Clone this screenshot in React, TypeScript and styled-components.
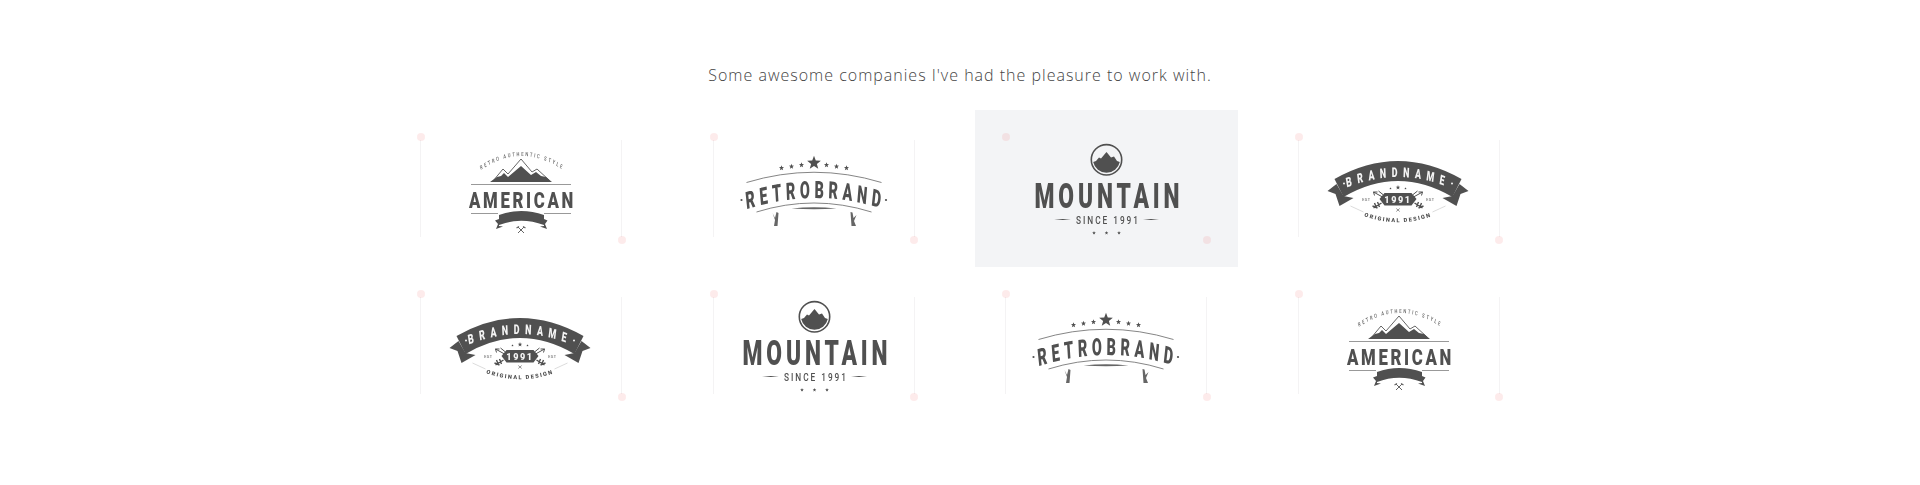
import React from "react";
import styled, { createGlobalStyle } from "styled-components";

const Global = createGlobalStyle`
  html, body { margin: 0; padding: 0; background: #fff; }
  body { font-family: "Open Sans", "Liberation Sans", sans-serif; }
`;

const Section = styled.section`
  width: 1140px;
  margin: 0 auto;
  padding: 60px 0 61px;
`;

const Title = styled.p`
  margin: 0 0 20px;
  font-size: 16px;
  font-weight: 300;
  line-height: 30px;
  letter-spacing: 1px;
  text-align: center;
  color: #444;
`;

const Grid = styled.div`
  display: grid;
  grid-template-columns: repeat(4, 262.5px);
  column-gap: 30px;
  grid-auto-rows: 157px;
`;

const Card = styled.div<{ $active?: boolean }>`
  position: relative;
  background: ${(p) => (p.$active ? "#f3f4f6" : "transparent")};
`;

const Dot = styled.span<{ $end?: boolean }>`
  position: absolute;
  left: ${(p) => (p.$end ? 227.5 : 27)}px;
  top: ${(p) => (p.$end ? 126 : 23)}px;
  width: 8px;
  height: 8px;
  border-radius: 50%;
  background: rgba(240, 110, 110, 0.14);
`;

const Rule = styled.span<{ $end?: boolean }>`
  position: absolute;
  left: ${(p) => (p.$end ? 231 : 30)}px;
  top: 30px;
  width: 1px;
  height: 97px;
  background: #f4f3f4;
`;

const Art = styled.svg`
  display: block;
  position: relative;
  width: 262.5px;
  height: 157px;
  filter: blur(0.4px);
`;

const Word = styled.text<{ $light?: boolean; $thin?: boolean; $soft?: boolean }>`
  font-family: Roboto, "Liberation Sans", sans-serif;
  font-weight: ${(p) => (p.$thin ? 500 : 900)};
  fill: ${(p) => (p.$light ? "#f4f4f4" : p.$soft ? "#6a6a6a" : "#505050")};
`;

const INK = "#505050";

function Star({ x, y, r }: { x: number; y: number; r: number }) {
  const pts: string[] = [];
  for (let i = 0; i < 10; i++) {
    const a = (Math.PI / 5) * i - Math.PI / 2;
    const q = i % 2 ? r * 0.42 : r;
    pts.push(`${(x + q * Math.cos(a)).toFixed(2)},${(y + q * Math.sin(a)).toFixed(2)}`);
  }
  return <polygon points={pts.join(" ")} fill={INK} />;
}

type ArcProps = {
  id: string;
  text: string;
  cx: number;
  apex: number;
  /** curvature: y = apex + bend * dx * dx, with dx in page units */
  bend: number;
  squeeze: number;
  size: number;
  spacing: number;
  light?: boolean;
  thin?: boolean;
  soft?: boolean;
};

/* Text on a parabola, squeezed horizontally because no condensed face is installed. */
function ArcWord({ id, text, cx, apex, bend, squeeze, size, spacing, light, thin, soft }: ArcProps) {
  const half = 100;
  const endY = apex + bend * half * half;
  const ctrlY = 2 * apex - endY;
  const w = half / squeeze;
  return (
    <g transform={`translate(${cx} 0) scale(${squeeze} 1)`}>
      <path id={id} d={`M${-w} ${endY} Q0 ${ctrlY} ${w} ${endY}`} fill="none" />
      <Word fontSize={size} letterSpacing={spacing} $light={light} $thin={thin} $soft={soft}>
        <textPath href={`#${id}`} startOffset="50%" textAnchor="middle">{text}</textPath>
      </Word>
    </g>
  );
}

function American({ uid }: { uid: string }) {
  return (
    <Art viewBox="390 110 262.5 157">
      <ArcWord id={`am-${uid}`} text="RETRO AUTHENTIC STYLE" cx={522} apex={156} bend={0.0082} squeeze={0.72} size={5.8} spacing={2.35} thin soft />
      <path d="M493 181 L503 169 L508 174 L521 159 L532 172 L537 169 L549 180" fill="none" stroke="#666" strokeWidth="1" />
      <polygon points="490,182 497,177 501,176 504,173 508,177 521,166 531,175 536,172 541,176 546,177 552,182" fill={INK} />
      <line x1="471" x2="571" y1="184.5" y2="184.5" stroke="#999" />
      <Word x="469" y="207.5" fontSize="22" letterSpacing="3.5" textLength="107" lengthAdjust="spacingAndGlyphs">AMERICAN</Word>
      <line x1="471" x2="498" y1="213.5" y2="213.5" stroke="#999" />
      <line x1="544" x2="571" y1="213.5" y2="213.5" stroke="#999" />
      <path d="M499 215 Q521 207 544 215 L544 225 Q521 216.5 499 225 Z" fill={INK} />
      <polygon points="499,219 495,220.5 498,224 496,229 503,226.5 499,226" fill={INK} />
      <polygon points="544,219 547.5,220.5 545,224 547,229 540,226.5 544,226" fill={INK} />
      <path d="M518 227 L524 233 M524 227 L518 233" stroke="#666" strokeWidth="1" />
      <path d="M516.5 228 L519 226.5 M525.5 228 L523 226.5" stroke="#666" strokeWidth="1.2" />
    </Art>
  );
}

function RetroBrand({ uid }: { uid: string }) {
  return (
    <Art viewBox="682.5 110 262.5 157">
      <Star x={813.5} y={163} r={7.2} />
      {[781, 791, 801, 826, 836, 846].map((x, i) => (
        <Star key={x} x={x} y={[168, 166.5, 165, 165, 166.5, 168][i]} r={2.7} />
      ))}
      <path d="M746 182.5 Q813.5 162 881 182.5" fill="none" stroke="#777" strokeWidth="0.9" />
      <ArcWord id={`rb-${uid}`} text="RETROBRAND" cx={815} apex={198} bend={0.0024} squeeze={0.6} size={24} spacing={7.5} />
      <circle cx="741" cy="200" r="1.1" fill={INK} />
      <circle cx="885.5" cy="200" r="1.1" fill={INK} />
      <path d="M756 212 Q813.5 194 871 212" fill="none" stroke="#777" strokeWidth="0.9" />
      <path d="M791 208.5 Q813.5 206 836 208.5 Q813.5 210 791 208.5 Z" fill="#666" />
      <path d="M772 213 L774.5 218 L776 212 L778 213 L777 226 L773.5 226 L774.5 220 Z" fill="#666" />
      <path d="M850 212 L852 212.5 L853 218 L856 215 L853.5 221 L855.5 226 L851 226 Z" fill="#666" />
    </Art>
  );
}

function Mountain() {
  return (
    <Art viewBox="975 110 262.5 157">
      <circle cx="1106.5" cy="159.8" r="15.2" fill="none" stroke={INK} strokeWidth="1.6" />
      <path
        d="M1093.2 162 L1096 161 L1099 157.5 L1101 158.5 L1106.5 152 L1111 157.5 L1114 156.5 L1117 161 L1119.8 162 A13.6 13.6 0 0 1 1093.2 162 Z"
        fill={INK}
      />
      <Word x="1034.5" y="208" fontSize="35" letterSpacing="6" textLength="149" lengthAdjust="spacingAndGlyphs">MOUNTAIN</Word>
      <path d="M1054 219.5 Q1063 218.6 1071 219.5 Q1063 220.4 1054 219.5 Z" fill={INK} />
      <path d="M1143 219.5 Q1151 218.6 1159 219.5 Q1151 220.4 1143 219.5 Z" fill={INK} />
      <Word x="1076" y="223.5" fontSize="10.5" letterSpacing="2.5" textLength="64" lengthAdjust="spacingAndGlyphs" $thin>SINCE 1991</Word>
      <Star x={1094} y={233} r={1.9} />
      <Star x={1106.5} y={233} r={1.9} />
      <Star x={1119} y={233} r={1.9} />
    </Art>
  );
}

function BrandName({ uid }: { uid: string }) {
  const mirror = "translate(2795 0) scale(-1 1)";
  const side = (
    <>
      <polygon points="1336,184 1327,191 1335,194 1339,206 1353,198 1343,196" fill={INK} />
      <path d="M1373 192 L1382 197 M1373 192 l4 0 M1373 192 l1 3.5 M1378 191 L1383 195" stroke={INK} strokeWidth="1" fill="none" />
      <path d="M1373 208 L1381 203 M1374 203 l2 5 M1377 202 l2 5 M1372 206 l5 2" stroke={INK} strokeWidth="1.4" fill="none" />
      <path d="M1350 206 L1363 212" stroke="#ccc" strokeWidth="0.7" fill="none" />
    </>
  );
  return (
    <Art viewBox="1267.5 110 262.5 157">
      {side}
      <g transform={mirror}>{side}</g>
      <path d="M1334 179 Q1397.5 143 1461 179 L1452 197 Q1397.5 165 1343 197 Z" fill={INK} />
      <ArcWord id={`bn-${uid}`} text="BRANDNAME" cx={1397.5} apex={177} bend={0.0041} squeeze={0.66} size={13.5} spacing={8.2} light />
      <circle cx="1343.5" cy="183.5" r="1" fill="#f4f4f4" />
      <circle cx="1451.5" cy="183.5" r="1" fill="#f4f4f4" />
      <Star x={1397.5} y={187.5} r={2.4} />
      <Star x={1390} y={188.5} r={1.2} />
      <Star x={1405} y={188.5} r={1.2} />
      <polygon points="1379,199 1384,193 1411,193 1416,199 1411,205.5 1384,205.5" fill={INK} />
      <Word x="1397.5" y="203" fontSize="9" textAnchor="middle" letterSpacing="1.6" $light>1991</Word>
      <Word x="1366" y="200.5" fontSize="3.8" textAnchor="middle" letterSpacing="0.6" $thin $soft>EST</Word>
      <Word x="1430" y="200.5" fontSize="3.8" textAnchor="middle" letterSpacing="0.6" $thin $soft>EST</Word>
      <path d="M1395.8 208.5 L1399.2 211.5 M1399.2 208.5 L1395.8 211.5" stroke="#666" strokeWidth="0.7" />
      <path id={`bl-${uid}`} d="M1327.5 196.5 Q1397.5 248 1467.5 196.5" fill="none" />
      <Word fontSize="5.6" letterSpacing="1.5">
        <textPath href={`#bl-${uid}`} startOffset="50%" textAnchor="middle">ORIGINAL DESIGN</textPath>
      </Word>
    </Art>
  );
}

const logos = [American, RetroBrand, Mountain, BrandName, BrandName, Mountain, RetroBrand, American];

export default function App() {
  return (
    <>
      <Global />
      <Section>
        <Title>Some awesome companies I've had the pleasure to work with.</Title>
        <Grid>
          {logos.map((Logo, i) => (
            <Card key={i} $active={i === 2}>
              {i !== 2 && <Rule />}
              {i !== 2 && <Rule $end />}
              <Dot />
              <Dot $end />
              <Logo uid={String(i)} />
            </Card>
          ))}
        </Grid>
      </Section>
    </>
  );
}
